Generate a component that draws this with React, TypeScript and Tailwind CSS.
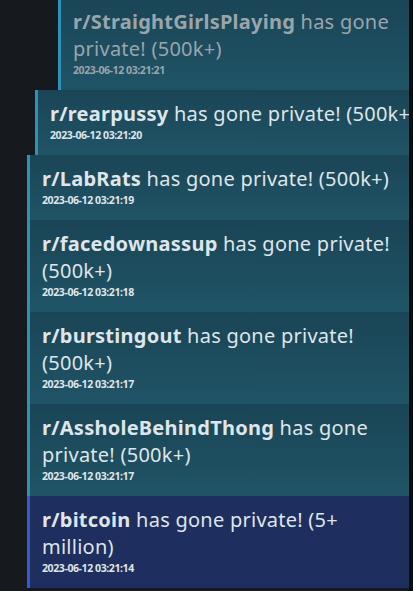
const ITEMS = [
  { sub: 'StraightGirlsPlaying', size: '500k+', time: '2023-06-12 03:21:21', shift: 'ml-[31px] -mr-[31px]', dim: true },
  { sub: 'rearpussy', size: '500k+', time: '2023-06-12 03:21:20', shift: 'ml-[8px] -mr-[8px]', dim: false, nowrap: true },
  { sub: 'LabRats', size: '500k+', time: '2023-06-12 03:21:19', shift: '', dim: false },
  { sub: 'facedownassup', size: '500k+', time: '2023-06-12 03:21:18', shift: '', dim: false },
  { sub: 'burstingout', size: '500k+', time: '2023-06-12 03:21:17', shift: '', dim: false },
  { sub: 'AssholeBehindThong', size: '500k+', time: '2023-06-12 03:21:17', shift: '', dim: false },
  { sub: 'bitcoin', size: '5+ million', time: '2023-06-12 03:21:14', shift: '', dim: false, big: true },
];

export default function App() {
  return (
    <div
      className="w-[413px] h-[591px] flex bg-[#161a1e] overflow-hidden"
      style={{ fontFamily: '"Noto Sans", "Open Sans", sans-serif' }}
    >
      <div className="flex-1 pl-[27px] -mt-[2px] flex flex-col overflow-hidden">
        {ITEMS.map((item, i) => (
          <div
            key={i}
            className={`shrink-0 border-l-[3px] pl-[12px] pr-[8px] pt-[10px] pb-[13px] ${item.shift} ${
              item.big
                ? 'border-[#2f5ed0] bg-[#1e2e5e]'
                : 'border-[#2b93b6] bg-gradient-to-b from-[#1a4556] to-[#1f5466]'
            }`}
          >
            <p
              className={`text-[20px] leading-[27px] tracking-[0.25px] ${item.nowrap ? 'whitespace-nowrap' : ''} ${
                item.dim ? 'text-[#9aa5ab]' : 'text-[#dfe5e9]'
              }`}
            >
              <span className="font-bold">r/{item.sub}</span> has gone private! ({item.size})
            </p>
            <p
              className={`mt-[2px] text-[10.5px] leading-[13px] font-bold tracking-[-0.4px] ${
                item.dim ? 'text-[#9aa5ab]' : 'text-[#dfe5e9]'
              }`}
            >
              {item.time}
            </p>
          </div>
        ))}
      </div>
      <div className="w-[4px] bg-[#0b0d0f]" />
    </div>
  );
}
